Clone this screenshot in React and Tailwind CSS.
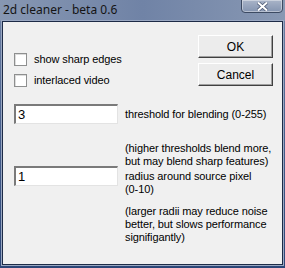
import React from "react";

const Checkbox = ({ label }) => (
  <label className="flex items-center gap-[7px] h-[13px]">
    <span className="w-[13px] h-[13px] bg-white border border-[#8e8f8f] shadow-[inset_1px_1px_0_#dcdcdc]" />
    <span>{label}</span>
  </label>
);

const Field = ({ value }) => (
  <div className="shrink-0 w-[104px] h-[20px] bg-white border-t-2 border-l-2 border-b border-r border-t-[#7a7a7a] border-l-[#7a7a7a] border-b-[#e3e3e3] border-r-[#e3e3e3] pl-[2px] leading-[17px] text-[13px] tracking-normal">
    {value}
  </div>
);

const Button = ({ children }) => (
  <button className="w-[75px] h-[23px] bg-[#ececec] border border-t-white border-l-white border-b-[#404040] border-r-[#404040] shadow-[inset_-1px_-1px_0_#a0a0a0] text-[12px] leading-none tracking-normal">
    {children}
  </button>
);

export default function App() {
  return (
    <div
      className="w-[285px] h-[268px] flex flex-col bg-gradient-to-b from-[#7284a6] via-[#465e8c] to-[#2c4677] overflow-hidden"
      style={{ fontFamily: '"Liberation Sans", Arial, sans-serif' }}
    >
      {/* title bar */}
      <div className="h-[21px] flex items-start justify-between bg-gradient-to-r from-[#8797b2] via-[#7083a6] to-[#8898b3]">
        <span className="pl-[3px] pt-[2px] text-[12px] text-[#141414] leading-[16px]" style={{ fontFamily: '"Noto Sans", "Open Sans", sans-serif' }}>
          2d cleaner - beta 0.6
        </span>
        <div className="mr-[2px] w-[42px] h-[14px] -mt-[1px] rounded-b-[4px] border border-[#3c4a62] bg-gradient-to-b from-[#a9b4c8] to-[#8494b0] shadow-[inset_0_0_0_1px_rgba(255,255,255,0.4)] flex items-center justify-center">
          <svg width="11" height="9" viewBox="0 0 11 9">
            <path d="M1 0.5 L10 8.5 M10 0.5 L1 8.5" stroke="#4a5670" strokeWidth="3.4" />
            <path d="M1 0.5 L10 8.5 M10 0.5 L1 8.5" stroke="#ffffff" strokeWidth="2" />
          </svg>
        </div>
      </div>

      {/* client area */}
      <div className="flex-1 mx-[2px] mb-[3px] border border-[#1d2b47] shadow-[0_0_0_1px_#9aa8c2] bg-[#f0f0f0] text-[11px] tracking-[-0.1px] whitespace-nowrap text-black pl-[11px] pr-[9px] pt-[13px]">
        <div className="flex justify-between">
          <div className="pt-[18px] flex flex-col gap-[8px]">
            <Checkbox label="show sharp edges" />
            <Checkbox label="interlaced video" />
          </div>
          <div className="flex flex-col gap-[5px]">
            <Button>OK</Button>
            <Button>Cancel</Button>
          </div>
        </div>

        <div className="mt-[17px] flex gap-[7px]">
          <Field value="3" />
          <div className="pt-[4px] leading-[13px]">
            <div>threshold for blending (0-255)</div>
            <div className="mt-[21px]">(higher thresholds blend more,</div>
            <div>but may blend sharp features)</div>
          </div>
        </div>

        <div className="-mt-[2px] flex gap-[7px]">
          <Field value="1" />
          <div className="pt-[4px] leading-[13px]">
            <div>radius around source pixel</div>
            <div>(0-10)</div>
            <div className="mt-[9px]">(larger radii may reduce noise</div>
            <div>better, but slows performance</div>
            <div>signifigantly)</div>
          </div>
        </div>
      </div>
    </div>
  );
}
